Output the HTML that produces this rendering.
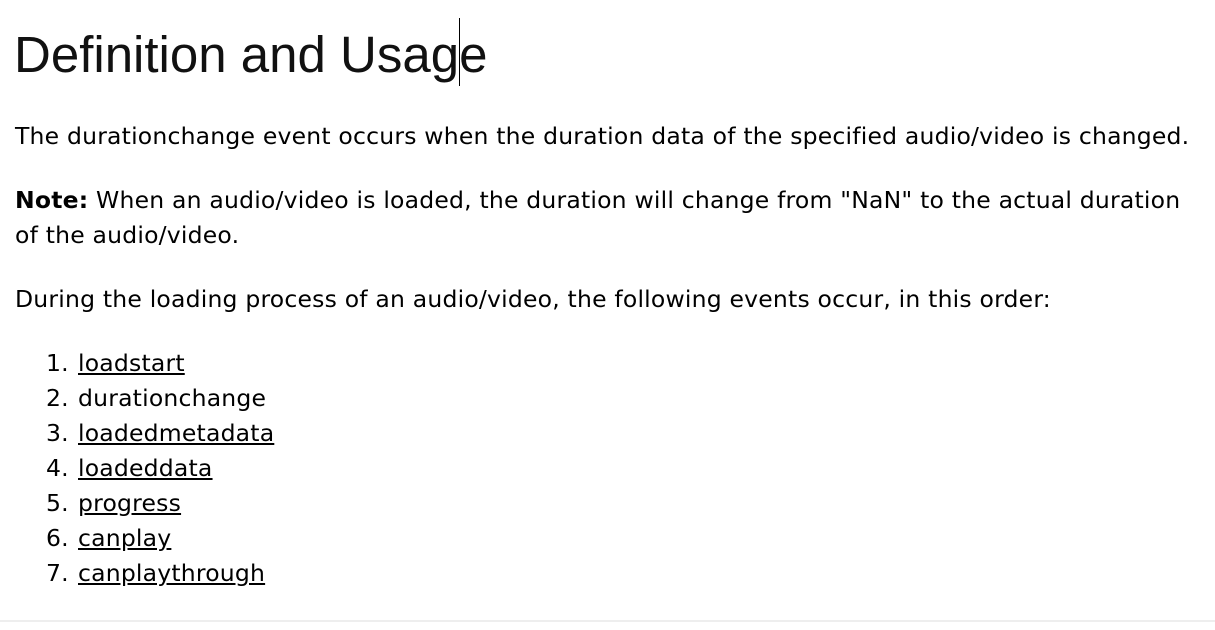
<!DOCTYPE html>
<html><head><meta charset="utf-8"><style>
body{margin:0;width:1215px;height:630px;background:#fff;position:relative;overflow:hidden;color:#000;font-family:"DejaVu Sans","Liberation Sans",sans-serif;}
.l{position:absolute;left:15px;font-size:23.5px;line-height:35px;white-space:nowrap;letter-spacing:0.2px;}
h1{position:absolute;left:14px;top:20px;margin:0;font-family:"Liberation Sans",sans-serif;font-weight:normal;font-size:51px;line-height:70px;white-space:nowrap;color:#111;}
a{color:#000;text-decoration:underline;}
.n{position:absolute;left:46px;}
.t{position:absolute;left:78px;}
.cur{position:absolute;left:459px;top:18px;width:1px;height:68px;background:#000;}
.hr{position:absolute;left:0;top:620px;width:1215px;height:2px;background:#eee;}
</style></head><body>
<h1>Definition and Usage</h1>
<div class="cur"></div>
<div class="l" style="top:119px">The durationchange event occurs when the duration data of the specified audio/video is changed.</div>
<div class="l" style="top:183px"><b>Note:</b> When an audio/video is loaded, the duration will change from "NaN" to the actual duration</div>
<div class="l" style="top:218px">of the audio/video.</div>
<div class="l" style="top:282px">During the loading process of an audio/video, the following events occur, in this order:</div>
<div class="l" style="top:346px;left:0"><span class="n">1.</span><span class="t"><a>loadstart</a></span></div>
<div class="l" style="top:381px;left:0"><span class="n">2.</span><span class="t">durationchange</span></div>
<div class="l" style="top:416px;left:0"><span class="n">3.</span><span class="t"><a>loadedmetadata</a></span></div>
<div class="l" style="top:451px;left:0"><span class="n">4.</span><span class="t"><a>loadeddata</a></span></div>
<div class="l" style="top:486px;left:0"><span class="n">5.</span><span class="t"><a>progress</a></span></div>
<div class="l" style="top:521px;left:0"><span class="n">6.</span><span class="t"><a>canplay</a></span></div>
<div class="l" style="top:556px;left:0"><span class="n">7.</span><span class="t"><a>canplaythrough</a></span></div>
<div class="hr"></div>
</body></html>
